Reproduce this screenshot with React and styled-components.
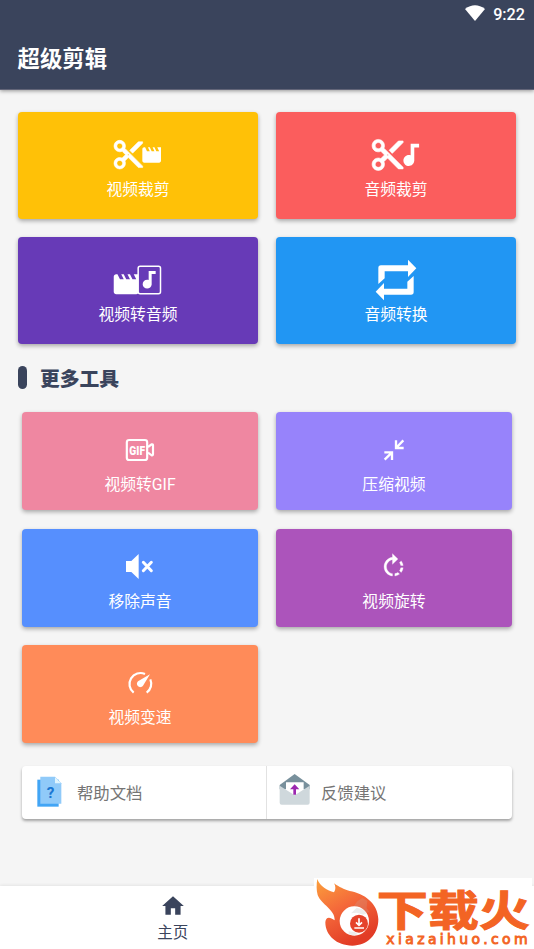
import styled, { createGlobalStyle } from 'styled-components'

const GlobalStyle = createGlobalStyle`
    * {
        box-sizing: border-box;
    }
    body {
        margin: 0;
        background-color: #f5f5f5;
        font-family: Roboto, "Noto Sans CJK SC", sans-serif;
        overflow: hidden;
    }
`

const Screen = styled.div`
    position: relative;
    display: flex;
    flex-direction: column;
    width: 534px;
    height: 949px;
    background-color: #f5f5f5;
`

const Header = styled.header`
    height: 90px;
    flex-shrink: 0;
    background-color: #3a445c;
    border-bottom: 1px solid #626578;
    box-shadow: 0 1px 4px rgba(0,0,0,0.4);
`

const StatusBar = styled.div`
    display: flex;
    align-items: center;
    justify-content: flex-end;
    gap: 8px;
    height: 28px;
    padding-right: 9px;
    color: #fff;
    font-size: 16.2px;
    font-weight: 500;
`

const WifiIcon = styled.svg`
    width: 20px;
    height: 16px;
    margin-bottom: 2px;
    fill: #fff;
`

const AppTitle = styled.h1`
    margin: 0;
    padding-left: 17.5px;
    line-height: 62px;
    font-size: 22.4px;
    font-weight: 700;
    color: #fff;
`

const Content = styled.main`
    flex: 1;
    padding: 22px 18px 0;
`

const MainTools = styled.div`
    display: grid;
    grid-template-columns: 240px 240px;
    grid-auto-rows: 107px;
    gap: 18px;
`

const MoreTools = styled.div`
    display: grid;
    grid-template-columns: 235.3px 235.3px;
    grid-auto-rows: 98px;
    gap: 18.6px 18.6px;
    padding: 0 4.4px;
`

const Tool = styled.div`
    display: flex;
    flex-direction: column;
    align-items: center;
    padding-top: ${({ $small }) => ($small ? '20px' : '19.7px')};
    border-radius: 4px;
    background-color: ${({ $color }) => $color};
    box-shadow: 0 2px 4px rgba(0,0,0,0.32);
    color: #fff;
`

const ToolIcon = styled.svg`
    width: ${({ $small }) => ($small ? '40px' : '60px')};
    height: ${({ $small }) => ($small ? '36px' : '45px')};
    flex-shrink: 0;
    fill: currentColor;
`

const ToolName = styled.span`
    line-height: 24px;
    margin-top: ${({ $small }) => ($small ? '5px' : '1px')};
    font-size: 15.8px;
`

const SectionTitle = styled.h2`
    display: flex;
    align-items: center;
    gap: 13px;
    height: 68px;
    margin: 0;
    padding-bottom: 2px;
    font-size: 19.8px;
    font-weight: 900;
    color: #3a445c;

    &::before {
        content: '';
        width: 9px;
        height: 23px;
        border-radius: 5px;
        background-color: #3a445c;
    }
`

const HelpBar = styled.div`
    display: flex;
    height: 53px;
    margin: 22.8px 4.4px 0;
    border-radius: 4px;
    background-color: #fff;
    box-shadow: 0 2px 3px rgba(0,0,0,0.34);
`

const HelpItem = styled.div`
    display: flex;
    align-items: center;
    width: 244px;
    padding: 0 0 1px 12px;
    gap: 11.5px;
    font-size: 16.4px;
    color: #757575;

    & + & {
        border-left: 1px solid #e2e2e2;
        padding-left: 11.5px;
        gap: 11px;
    }
`

const HelpIcon = styled.svg`
    width: 31px;
    height: 35px;
    margin-bottom: 2px;
`

const BottomNav = styled.nav`
    display: flex;
    height: 63px;
    flex-shrink: 0;
    background-color: #fff;
    box-shadow: 0 -1px 3px rgba(0,0,0,0.07);
`

const NavItem = styled.div`
    display: flex;
    flex-direction: column;
    align-items: center;
    gap: 1.5px;
    width: 345.5px;
    padding-top: 7px;
    color: #3a445c;
    font-size: 15.5px;
    line-height: 24px;
`

const NavIcon = styled.svg`
    width: 26px;
    height: 26px;
    fill: currentColor;
`

const Watermark = styled.svg`
    position: absolute;
    left: 314px;
    top: 878px;
    width: 218px;
    height: 71px;
    background-color: #fff;
`

const SCISSORS = 'M9.64 7.64c.23-.5.36-1.05.36-1.64 0-2.21-1.79-4-4-4S2 3.79 2 6s1.79 4 4 4c.59 0 1.14-.13 1.64-.36L10 12l-2.36 2.36C7.14 14.13 6.59 14 6 14c-2.21 0-4 1.79-4 4s1.79 4 4 4 4-1.79 4-4c0-.59-.13-1.14-.36-1.64L12 14l7 7h3v-1L9.64 7.64zM6 8c-1.1 0-2-.89-2-2s.9-2 2-2 2 .89 2 2-.9 2-2 2zm0 12c-1.1 0-2-.89-2-2s.9-2 2-2 2 .89 2 2-.9 2-2 2zm6-7.5c-.28 0-.5-.22-.5-.5s.22-.5.5-.5.5.22.5.5-.22.5-.5.5zM19 3l-6 6 2 2 7-7V3z'
const MOVIE = 'M18 4l2 4h-3l-2-4h-2l2 4h-3l-2-4H8l2 4H7L5 4H4c-1.1 0-1.99.9-1.99 2L2 18c0 1.1.9 2 2 2h16c1.1 0 2-.9 2-2V4h-4z'
const NOTE = 'M12 3v9.28c-.47-.17-.97-.28-1.5-.28C8.01 12 6 14.01 6 16.5S8.01 21 10.5 21c2.31 0 4.2-1.75 4.45-4H15V6h4V3h-7z'
const ROTATE = 'M15.55 5.55L11 1v3.07C7.06 4.56 4 7.92 4 12s3.05 7.44 7 7.93v-2.02c-2.84-.48-5-2.94-5-5.91s2.16-5.43 5-5.91V10l4.55-4.45zM19.93 11c-.17-1.39-.72-2.73-1.62-3.89l-1.42 1.42c.54.75.88 1.6 1.02 2.47h2.02zM13 17.9v2.02c1.39-.17 2.74-.71 3.9-1.61l-1.44-1.44c-.75.54-1.59.89-2.46 1.03zm3.89-2.42l1.42 1.41c.9-1.16 1.45-2.5 1.62-3.89h-2.02c-.14.87-.48 1.72-1.02 2.48z'

const mainTools = [
  {
    name: '视频裁剪',
    color: '#ffc107',
    viewBox: '54 20 180 135',
    icon: (
      <>
        <path transform="translate(63.4 36.4) scale(4.3)" d={SCISSORS} stroke="currentColor" strokeWidth="0.4" />
        <path transform="translate(151.4 54.3) scale(2.8 2.9)" d={MOVIE} />
      </>
    ),
  },
  {
    name: '音频裁剪',
    color: '#fb5d5d',
    viewBox: '48 20 180 135',
    icon: (
      <>
        <path transform="translate(57 33) scale(4.65)" d={SCISSORS} stroke="currentColor" strokeWidth="0.4" />
        <path transform="translate(138.5 44) scale(3.62 3.72)" d={NOTE} />
      </>
    ),
  },
  {
    name: '视频转音频',
    color: '#673ab7',
    viewBox: '54 20 180 135',
    icon: (
      <>
        <path transform="translate(63.7 57) scale(3.75)" d={MOVIE} />
        <rect x="144.5" y="48" width="67" height="82" rx="6" fill="#673ab7" stroke="currentColor" strokeWidth="4.5" />
        <path transform="translate(140 53.5) scale(3 2.92)" d={NOTE} />
      </>
    ),
  },
  {
    name: '音频转换',
    color: '#2196f3',
    viewBox: '48 20 180 135',
    icon: (
      <>
        <path d="M85 101V53Q85 45 93 45H174V28L199 54L174 80V63H104V84Z" />
        <path d="M191 77V125Q191 133 183 133H102V150L77 124L102 98V115H172V94Z" />
      </>
    ),
  },
]

const moreTools = [
  {
    name: '视频转GIF',
    color: '#ef87a1',
    viewBox: '360 231 120 108',
    icon: (
      <>
        <rect x="380.5" y="255" width="61" height="60" rx="7" fill="none" stroke="currentColor" strokeWidth="6.5" />
        <path d="M444 276L455 268Q459 267 459 271V298Q459 302 455 301L444 293" fill="none" stroke="currentColor" strokeWidth="6.5" />
        <text x="388" y="299" fontSize="38" fontWeight="900" textLength="47" lengthAdjust="spacingAndGlyphs">GIF</text>
      </>
    ),
  },
  {
    name: '压缩视频',
    color: '#9783fb',
    viewBox: '102 6 120 108',
    icon: <path d="M168 31V54H191M168 54L190 31M133 67H156V90M156 67L134 89" fill="none" stroke="currentColor" strokeWidth="7" />,
  },
  {
    name: '移除声音',
    color: '#568ffe',
    viewBox: '90 27 120 108',
    icon: (
      <>
        <path d="M108 63H124L146 42V117L124 96H108Z" />
        <path d="M160 67L184 92M184 67L160 92" stroke="currentColor" strokeWidth="9" strokeLinecap="round" />
      </>
    ),
  },
  {
    name: '视频旋转',
    color: '#ac54bb',
    viewBox: '102 27 120 108',
    icon: <path transform="translate(117.8 37.5) scale(3.6 3.54)" d={ROTATE} stroke="currentColor" strokeWidth="0.25" />,
  },
  {
    name: '视频变速',
    color: '#ff8b59',
    viewBox: '90 15 120 108',
    icon: (
      <>
        <path d="M131 98A33 33 0 0 1 165 42M181 58A33 33 0 0 1 170 98" fill="none" stroke="currentColor" strokeWidth="6.5" />
        <path d="M180 43L159 77A10 10 0 1 1 144 64Z" />
      </>
    ),
  },
]

function ToolCard({ tool, small }) {
  return (
    <Tool $color={tool.color} $small={small}>
      <ToolIcon viewBox={tool.viewBox} $small={small}>{tool.icon}</ToolIcon>
      <ToolName $small={small}>{tool.name}</ToolName>
    </Tool>
  )
}

function SiteLogo() {
  return (
    <Watermark viewBox="42 24 654 213">
      <defs>
        <linearGradient id="flame" x1="0" y1="0" x2="0.5" y2="1">
          <stop offset="0" stopColor="#fba03c" />
          <stop offset="0.5" stopColor="#f4683a" />
          <stop offset="1" stopColor="#e23c26" />
        </linearGradient>
      </defs>
      <path fill="url(#flame)" d="M52 27C60 50 82 61 102 67C108 58 107 48 102 40C119 52 130 57 149 63C193 70 234 101 235 148C235 195 201 227 157 227C110 227 76 196 76 157C77 143 86 137 104 151C106 119 64 104 53 75C49 61 49 43 52 27Z" />
      <path fill="#c9a79d" fillOpacity="0.25" d="M153 119L172 94L187 84L202 92L200 115L209 127L190 129L171 124Z" />
      <circle cx="163" cy="153" r="44" fill="#fff" />
      <path fill="#ececec" d="M153 130L170 113L188 118L200 130L190 134L171 128ZM146 184L163 186L174 193L158 196L146 192Z" />
      <circle cx="177" cy="161" r="27" fill="#e5432b" />
      <path d="M177 145V162M168 157L177 166L186 157M163 174H192" fill="none" stroke="#fff" strokeWidth="5" />
      <g fill="#f36424" stroke="#f36424">
        <text x="230" y="168" fontSize="126" fontWeight="700" fontFamily='"Noto Sans CJK SC", sans-serif' strokeWidth="3" textLength="460" lengthAdjust="spacingAndGlyphs">下载火</text>
        <text x="259" y="221" fontSize="42" fontFamily='"DejaVu Sans", sans-serif' strokeWidth="2.6" textLength="424">xiazaihuo.com</text>
      </g>
    </Watermark>
  )
}

export default function App() {
  return (
    <>
      <GlobalStyle />
      <Screen>
        <Header>
          <StatusBar>
            <WifiIcon viewBox="0 0 20 16">
              <path d="M0 4Q10-3.5 20 4L10 16Z" />
            </WifiIcon>
            9:22
          </StatusBar>
          <AppTitle>超级剪辑</AppTitle>
        </Header>

        <Content>
          <MainTools>
            {mainTools.map((tool) => (
              <ToolCard key={tool.name} tool={tool} />
            ))}
          </MainTools>

          <SectionTitle>更多工具</SectionTitle>

          <MoreTools>
            {moreTools.map((tool) => (
              <ToolCard key={tool.name} tool={tool} small />
            ))}
          </MoreTools>

          <HelpBar>
            <HelpItem>
              <HelpIcon viewBox="72 55 93 105">
                <path d="M82 75H146V156H82Z" fill="#42a5f5" />
                <path d="M91 66H135L154 86V147H91Z" fill="#90caf9" />
                <path d="M135 68V86H153Z" fill="#e1f5fe" />
                <text x="122" y="130" textAnchor="middle" fontSize="46" fontWeight="700" fill="#1976d2">?</text>
              </HelpIcon>
              帮助文档
            </HelpItem>
            <HelpItem>
              <HelpIcon viewBox="805 55 93 105">
                <path d="M807 91L852 58L897 91V104H807Z" fill="#78909c" />
                <path d="M826 83H879V110L852 126L826 110Z" fill="#fff" />
                <path d="M807 93L852 122L897 93V144Q897 150 891 150H813Q807 150 807 144Z" fill="#cfd8dc" />
                <path d="M852 89L866 104H856V120H848V104H838Z" fill="#9c27b0" />
              </HelpIcon>
              反馈建议
            </HelpItem>
          </HelpBar>
        </Content>

        <BottomNav>
          <NavItem>
            <NavIcon viewBox="0 0 24 24">
              <path d="M10 20v-6h4v6h5v-8h3L12 3 2 12h3v8z" />
            </NavIcon>
            主页
          </NavItem>
        </BottomNav>
        <SiteLogo />
      </Screen>
    </>
  )
}
